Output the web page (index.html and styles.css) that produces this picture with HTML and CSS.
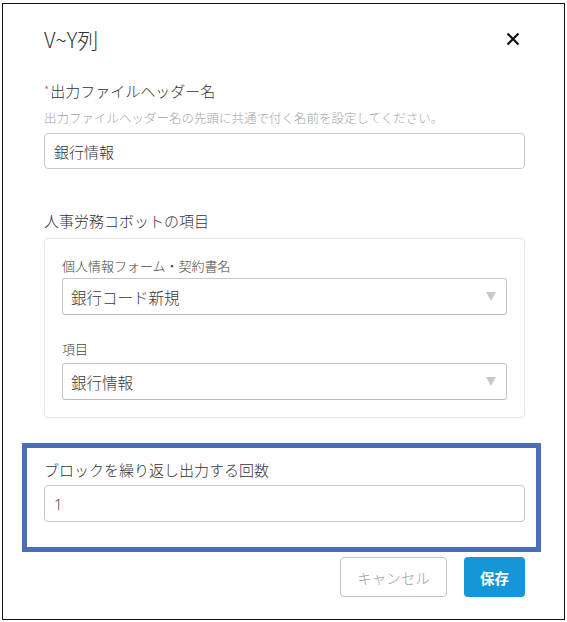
FILE: index.html
```html
<!DOCTYPE html>
<html lang="ja">
<head>
    <meta charset="UTF-8">
    <title>V~Y列</title>
    <link rel="stylesheet" href="styles.css">
</head>
<body>

<div class="frame">
    <div class="modal-header">
        <h2 class="modal-title">V~Y列</h2>
        <button class="close" type="button" aria-label="閉じる">
            <svg width="14" height="14" viewBox="0 0 14 14">
                <path d="M1.5 1.5 L12.5 12.5 M12.5 1.5 L1.5 12.5" stroke="#111" stroke-width="2.2" fill="none"/>
            </svg>
        </button>
    </div>

    <div class="field">
        <label class="field-label"><span class="required">*</span>出力ファイルヘッダー名</label>
        <p class="help">出力ファイルヘッダー名の先頭に共通で付く名前を設定してください。</p>
        <input type="text" class="inputval" value="銀行情報">
    </div>

    <div class="field section">
        <label class="field-label">人事労務コボットの項目</label>
        <div class="card">
            <label class="small-label">個人情報フォーム・契約書名</label>
            <div class="select">
                <span>銀行コード新規</span>
                <svg width="10" height="9" viewBox="0 0 10 9"><polygon points="0,0 10,0 5,9" fill="#c9c9c9"/></svg>
            </div>
            <label class="small-label second">項目</label>
            <div class="select">
                <span>銀行情報</span>
                <svg width="10" height="9" viewBox="0 0 10 9"><polygon points="0,0 10,0 5,9" fill="#c9c9c9"/></svg>
            </div>
        </div>
    </div>

    <!-- highlighted block -->
    <div class="highlight">
        <label class="field-label">ブロックを繰り返し出力する回数</label>
        <input type="text" class="inputval count" value="1">
    </div>

    <div class="actions">
        <button type="button" class="btn cancel">キャンセル</button>
        <button type="button" class="btn save">保存</button>
    </div>
</div>

</body>
</html>
```

FILE: styles.css
```css
body {
    margin: 0;
    background: #fff;
    font-family: "Noto Sans CJK JP", "Noto Sans", sans-serif;
    font-weight: 300;
    color: #3e3e3c;
}

.frame {
    box-sizing: border-box;
    width: 563px;
    height: 617px;
    margin: 3px 0 0 2px;
    border: 1px solid #111;
    padding: 0 39px 0 41px;
}

.modal-header {
    display: flex;
    justify-content: space-between;
    align-items: center;
    padding-top: 20px;
}
.modal-title {
    margin: 0;
    font-size: 21px;
    line-height: 30px;
    font-weight: 300;
    color: #333;
}
.close {
    border: none;
    background: none;
    padding: 0;
    margin: 0 5px 0 0;
    width: 14px;
    height: 14px;
    display: flex;
}

.field {
    margin-top: 25px;
}
.section {
    margin-top: 41px;
}

.field-label {
    display: block;
    font-size: 15px;
    line-height: 22px;
    color: #333;
}
.required {
    color: #d9534f;
    font-size: 12px;
    margin-right: 1px;
    vertical-align: 2px;
}
.help {
    margin: 5px 0 4px;
    font-size: 12.5px;
    line-height: 22px;
    color: #a3a3a3;
}

.inputval {
    box-sizing: border-box;
    display: block;
    width: 100%;
    height: 36px;
    margin: 0;
    padding: 0 9px;
    border: 1px solid #c9c9c9;
    border-radius: 4px;
    font-family: inherit;
    font-weight: 300;
    font-size: 15px;
    color: #333;
    background: #fff;
    outline: none;
}

.card {
    margin-top: 6px;
    border: 1px solid #e6e6e6;
    border-radius: 4px;
    padding: 17px;
}
.small-label {
    display: block;
    font-size: 13px;
    line-height: 20px;
    color: #444;
    margin-bottom: 2px;
}
.small-label.second {
    margin-top: 24px;
    margin-bottom: 4px;
}
.select {
    box-sizing: border-box;
    height: 37px;
    display: flex;
    align-items: center;
    justify-content: space-between;
    padding: 0 10px 0 8px;
    border: 1px solid #c9c9c9;
    border-bottom-color: #bdbdbd;
    border-radius: 3px;
    font-size: 15.5px;
    color: #3a3a3a;
}

.highlight {
    margin: 25px -16px 0 -22px;
    border: 5px solid #4a6fb6;
    padding: 11px 11px 25px 17px;
}
.count {
    height: 37px;
    margin-top: 4px;
    font-family: "Open Sans", "Noto Sans", sans-serif;
}

.actions {
    display: flex;
    justify-content: flex-end;
    gap: 17px;
    margin-top: 5px;
}
.btn {
    height: 40px;
    border-radius: 4px;
    font-family: inherit;
    font-size: 14.5px;
    padding: 0;
}
.cancel {
    width: 107px;
    background: #fff;
    border: 1px solid #c4c4c4;
    color: #a0a0a0;
    font-weight: 300;
}
.save {
    width: 61px;
    background: #1596d6;
    border: none;
    color: #fff;
    font-weight: bold;
}
```
